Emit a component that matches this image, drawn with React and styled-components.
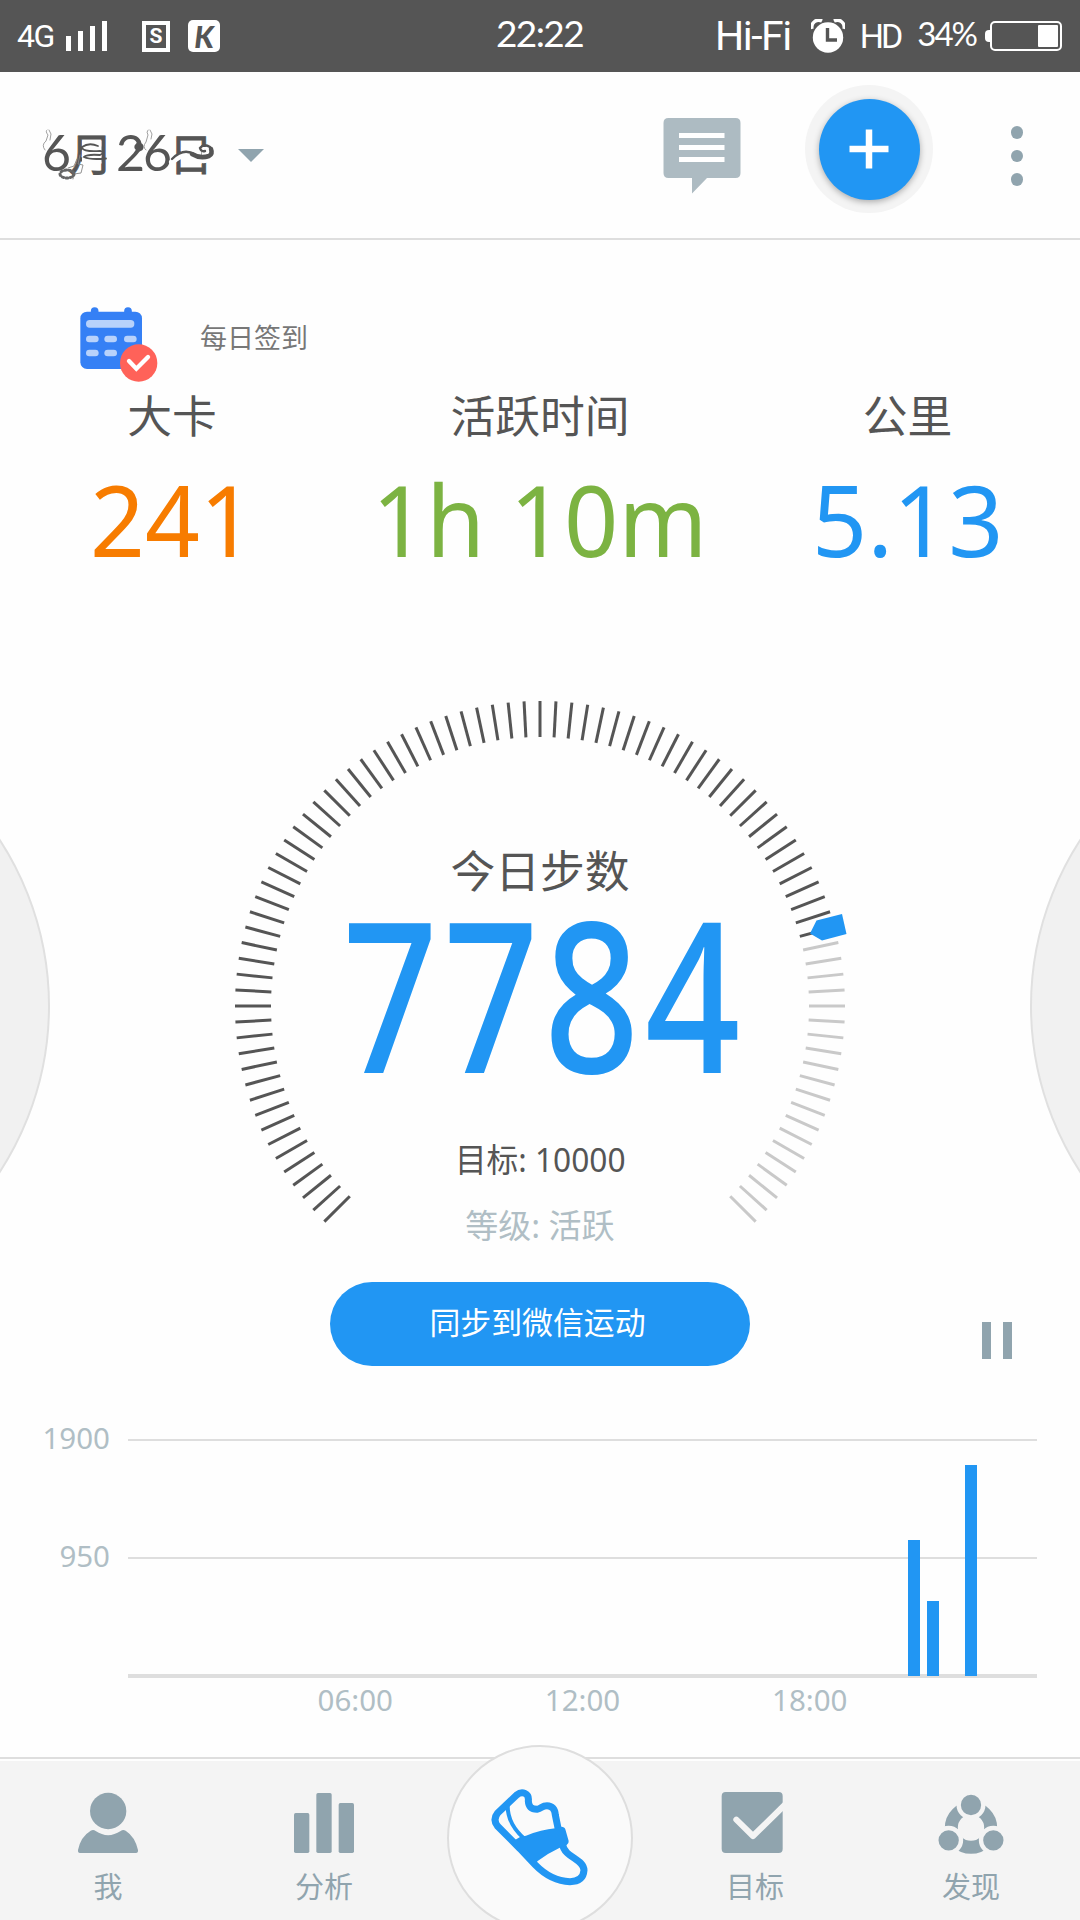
import React from "react";
import styled, { createGlobalStyle } from "styled-components";

const BLUE = "#2196f3";
const INK = "#555555";
const SLATE = "#90a4ae";
const MIST = "#b0bec5";
const RULE = "#dedede";

const GlobalStyle = createGlobalStyle`
  * { box-sizing: border-box; }
  body { margin: 0; background: #fefefe; }
`;

const Screen = styled.div`
  position: relative;
  width: 1080px;
  height: 1920px;
  overflow: hidden;
  display: flex;
  flex-direction: column;
  background: #fefefe;
  color: ${INK};
  font-family: "Noto Sans", "Noto Sans CJK SC", sans-serif;
`;

/* ---------- status bar ---------- */

const StatusBar = styled.header`
  flex: none;
  height: 72px;
  display: grid;
  grid-template-columns: 1fr auto 1fr;
  align-items: center;
  background: #555555;
  color: #fff;
  padding: 0 18px 0 17px;
  font-family: Roboto, "Liberation Sans", sans-serif;
`;

const StatusGroup = styled.div`
  display: flex;
  align-items: center;
  height: 72px;
  justify-content: ${(p) => (p.$end ? "flex-end" : "flex-start")};
`;

const StatusText = styled.span`
  display: block;
  white-space: nowrap;
  font-family: ${(p) => p.$family || "Roboto"}, sans-serif;
  font-size: ${(p) => p.$size}px;
  font-weight: ${(p) => p.$weight || 400};
  letter-spacing: ${(p) => p.$track || 0}px;
  line-height: 40px;
  width: ${(p) => (p.$width ? `${p.$width}px` : "auto")};
  padding-bottom: ${(p) => p.$lift || 0}px;
  margin-right: ${(p) => p.$after || 0}px;
`;

const Signal = styled.div`
  display: flex;
  align-items: flex-end;
  gap: 7px;
  height: 30px;
  margin-right: 35px;
`;

const SignalBar = styled.i`
  width: 5px;
  height: ${(p) => p.$height}px;
  background: #fff;
`;

const AppBadge = styled.span`
  display: flex;
  align-items: center;
  justify-content: center;
  width: ${(p) => (p.$solid ? 32 : 28)}px;
  height: ${(p) => (p.$solid ? 32 : 31)}px;
  margin-right: ${(p) => (p.$solid ? 0 : 18)}px;
  border: ${(p) => (p.$solid ? "none" : "4px solid #fff")};
  border-radius: ${(p) => (p.$solid ? 5 : 0)}px;
  background: ${(p) => (p.$solid ? "#fff" : "transparent")};
  color: ${(p) => (p.$solid ? "#555555" : "#fff")};
  font: ${(p) => (p.$solid ? "italic 900 30px/32px Lato" : "700 21px/23px Roboto")}, sans-serif;
`;

const BadgeNotch = styled.i`
  align-self: flex-start;
  width: 4px;
  height: 6px;
  margin: 0 -3px 0 0;
  transform: translateY(-12px);
  background: #fff;
`;

const AlarmSvg = styled.svg`
  width: 34px;
  height: 34px;
  margin-right: 15px;
`;

const Battery = styled.div`
  display: flex;
  align-items: center;
`;

const BatteryNub = styled.i`
  width: 5px;
  height: 12px;
  border-radius: 4px 0 0 4px;
  background: #fff;
`;

const BatteryCase = styled.div`
  display: flex;
  justify-content: flex-end;
  width: 72px;
  height: 30px;
  padding: 2px;
  border: 2px solid #fff;
  border-radius: 5px;
`;

const BatteryFill = styled.i`
  width: 20px;
  border-radius: 1px;
  background: #fff;
`;

/* ---------- app bar ---------- */

const AppBar = styled.div`
  flex: none;
  height: 168px;
  display: flex;
  align-items: flex-start;
  padding: 13px 57px 0 42px;
  border-bottom: 2px solid ${RULE};
`;

const DateButton = styled.div`
  position: relative;
  display: flex;
  align-items: baseline;
  width: 196px;
  height: 66px;
  margin-top: 34px;
  line-height: 66px;
  color: #555;
`;

const DateDigit = styled.span`
  width: ${(p) => p.$width}px;
  font-family: Lato, sans-serif;
  font-size: 50px;
`;

const DateHan = styled.span`
  width: ${(p) => p.$width}px;
  font-family: "Noto Sans CJK SC", sans-serif;
  font-size: 44px;
  -webkit-text-stroke: 0.8px #555;
`;

const Flourish = styled.svg`
  position: absolute;
  left: 0;
  top: 1px;
  width: 180px;
  height: 66px;
`;

const Caret = styled.i`
  margin-top: 64px;
  border: 13.5px solid transparent;
  border-top: 13px solid ${SLATE};
  border-bottom: 0;
`;

const ChatSvg = styled.svg`
  width: 78px;
  height: 76px;
  margin: 33px 64.5px 0 auto;
`;

const FabHalo = styled.div`
  display: flex;
  align-items: center;
  justify-content: center;
  width: 128px;
  height: 128px;
  border-radius: 50%;
  background: #f4f4f4;
`;

const Fab = styled.button`
  display: flex;
  align-items: center;
  justify-content: center;
  width: 101px;
  height: 101px;
  padding: 0;
  border: 0;
  border-radius: 50%;
  background: ${BLUE};
  box-shadow: 0 2px 6px rgba(0, 0, 0, 0.3);
`;

const MoreDots = styled.div`
  display: flex;
  flex-direction: column;
  gap: 11px;
  margin: 41px 0 0 78px;
`;

const Dot = styled.i`
  width: 12px;
  height: 12.5px;
  border-radius: 50%;
  background: ${SLATE};
`;

/* ---------- summary ---------- */

const CheckIn = styled.div`
  flex: none;
  display: flex;
  align-items: flex-start;
  height: 76px;
  margin-top: 67px;
  padding-left: 80px;
`;

const CalendarSvg = styled.svg`
  width: 78px;
  height: 75px;
  margin-right: 42px;
`;

const CheckInLabel = styled.span`
  margin-top: 11px;
  font-size: 27px;
  line-height: 40px;
  color: #777;
`;

const Stats = styled.div`
  flex: none;
  display: flex;
  height: 217px;
`;

const Stat = styled.div`
  display: flex;
  flex-direction: column;
  align-items: center;
  width: ${(p) => p.$width}px;
`;

const Label = styled.div`
  font-size: 44.8px;
  line-height: 66px;
  white-space: nowrap;
`;

const StatValue = styled.div`
  margin-top: 2px;
  font-size: 99.5px;
  line-height: 136px;
  white-space: nowrap;
  color: ${(p) => p.$color};
  transform: scaleX(${(p) => p.$squeeze});
`;

/* ---------- dial ---------- */

const DialRow = styled.section`
  flex: none;
  position: relative;
  display: flex;
  justify-content: center;
  height: 682px;
`;

const SideDial = styled.div`
  position: absolute;
  top: 101px;
  ${(p) => p.$side}: -560px;
  width: 610px;
  height: 610px;
  border: 2px solid #e0e0e0;
  border-radius: 50%;
  background: #f1f1f1;
`;

const Dial = styled.div`
  position: relative;
  display: flex;
  flex-direction: column;
  align-items: center;
  width: 620px;
  padding-top: 238px;
`;

const TickSvg = styled.svg`
  position: absolute;
  left: 0;
  top: 96px;
  width: 620px;
  height: 620px;
`;

const Steps = styled.div`
  height: 237px;
  margin-top: -15px;
  padding-left: 10px;
  font-size: 208.5px;
  line-height: 206px;
  font-weight: 500;
  letter-spacing: 6.8px;
  color: ${BLUE};
  transform: scaleX(0.8);
`;

const Note = styled.div`
  height: 66px;
  font-size: 33.5px;
  line-height: 66px;
  white-space: nowrap;
  color: ${(p) => p.$color};
  transform: scaleX(${(p) => p.$squeeze});
`;

const SyncRow = styled.div`
  flex: none;
  display: flex;
  justify-content: center;
  align-items: flex-start;
  height: 108px;
  padding-left: 330px;
`;

const SyncButton = styled.button`
  width: 420px;
  height: 84px;
  margin-right: auto;
  padding: 0 5px 6px 0;
  border: 0;
  border-radius: 42px;
  background: ${BLUE};
  color: #fff;
  font: 400 30.9px/70px "Noto Sans CJK SC", sans-serif;
`;

const Pause = styled.div`
  display: flex;
  gap: 12px;
  margin: 40px 68.5px 0 0;
`;

const PauseBar = styled.i`
  width: 9px;
  height: 37px;
  background: ${SLATE};
`;

/* ---------- chart ---------- */

const Chart = styled.section`
  flex: none;
  display: grid;
  grid-template-columns: 110px 909px;
  align-content: start;
  column-gap: 18px;
  height: 367px;
  padding-top: 49px;
  color: ${MIST};
  font-size: 29.5px;
`;

const AxisY = styled.div`
  display: flex;
  flex-direction: column;
  align-items: flex-end;
  gap: 78px;
  margin-top: -21px;
  line-height: 40px;
`;

const Plot = styled.div`
  height: 239px;
  display: grid;
  grid-template-columns: repeat(48, 1fr);
  align-items: end;
  justify-items: center;
  border-bottom: 4px solid ${RULE};
  background:
    linear-gradient(${RULE}, ${RULE}) 0 0 / 100% 2px no-repeat,
    linear-gradient(${RULE}, ${RULE}) 0 118px / 100% 2px no-repeat;
`;

const PlotBar = styled.i`
  grid-column: ${(p) => p.$slot};
  grid-row: 1;
  width: 12px;
  margin-bottom: -2px;
  background: ${BLUE};
`;

const AxisX = styled.div`
  grid-column: 2;
  display: grid;
  grid-template-columns: repeat(3, 227.25px);
  padding: 2px 0 0 113.6px;
  line-height: 40px;
  text-align: center;
`;

/* ---------- bottom navigation ---------- */

const Nav = styled.nav`
  flex: none;
  position: relative;
  display: grid;
  grid-template-columns: repeat(5, 216px);
  height: 163px;
  border-top: 2px solid ${RULE};
  background: linear-gradient(#fefefe 2px, #f4f4f4 2px);
`;

const NavItem = styled.div`
  display: flex;
  flex-direction: column;
  align-items: center;
  padding-top: 32px;
  padding-right: ${(p) => (p.$late ? 2 : 0)}px;
  color: ${SLATE};
`;

const NavSvg = styled.svg`
  width: 72px;
  height: 64px;
  margin-left: ${(p) => p.$nudge || 0}px;
`;

const NavLabel = styled.span`
  margin-top: 11px;
  font-size: 29px;
  line-height: 41px;
`;

const HomeDisc = styled.div`
  position: absolute;
  left: 447px;
  top: -14px;
  width: 186px;
  height: 186px;
  border: 2px solid ${RULE};
  border-radius: 50%;
  background: #fafafa;
  display: flex;
  justify-content: center;
  padding-top: 40px;
`;

const ShoeSvg = styled.svg`
  width: 100px;
  height: 100px;
`;

function Alarm() {
  return (
    <AlarmSvg viewBox="0 0 34 34">
      <path d="M1 10A7 7 0 0 1 11 2M33 10A7 7 0 0 0 23 2" fill="none" stroke="#fff" strokeWidth="3.5" />
      <circle cx="17" cy="18.5" r="15.2" fill="#fff" />
      <path d="M16.5 9V21H26" fill="none" stroke="#555" strokeWidth="3.4" />
    </AlarmSvg>
  );
}

function DateFlourish() {
  return (
    <Flourish viewBox="0 0 180 66" fill="none" strokeLinecap="round">
      <path d="M3 30Q-1 25 4 21L6 15Q3 11 5 10M8 20L9 14L7 10" stroke="#888" strokeWidth="0.8" />
      <rect x="40" y="20.5" width="19.500" height="23" fill="#fefefe" />
      <path d="M40 27Q47 22 56 26M40 28Q42 32 58 31Q64 32 58 35Q45 34 42 37Q48 40 64 38.500" stroke="#555" strokeWidth="1.800" />
      <path d="M38 35L36 44L41 45L39 53L32 54L31 59M35 39L32 46L26 48" stroke="#888" strokeWidth="0.9" />
      <ellipse cx="25" cy="54" rx="7" ry="4" stroke="#666" strokeWidth="3" strokeDasharray="1.5 2.5" />
      <circle cx="97" cy="27" r="2.600" stroke="#555" strokeWidth="4" strokeDasharray="1.8 1.8" />
      <path d="M104 30Q100 27 104 22L106 15Q104 12 106 10M109 19L110 14L108 10" stroke="#888" strokeWidth="0.8" />
      <rect x="139" y="27" width="20.500" height="17" fill="#fefefe" />
      <path d="M160 27H168V41H160Z" fill="#fefefe" />
      <path d="M130 42Q142 30 154 38Q163 43 169 36" stroke="#fefefe" strokeWidth="6" />
      <path d="M130 39Q142 27 153 35Q160 40 168 36Q170 29 168 27Q162 23 158 28Q159 32 163 31" stroke="#555" strokeWidth="2.400" />
      <path d="M150 34Q158 39 167 36Q171 34 169 29" stroke="#555" strokeWidth="4.500" />
    </Flourish>
  );
}

function Chat() {
  return (
    <ChatSvg viewBox="0 0 78 76">
      <path d="M5.500 0H72.500Q77.500 0 77.500 5V55Q77.500 60 72.500 60H44L29 75.500V60H5.500Q0.500 60 0.500 55V5Q0.500 0 5.500 0Z" fill="#adbbc2" />
      <path d="M16 17.500H61.500M16 29.500H61.500M16 41.500H61.500" stroke="#fff" strokeWidth="5" />
    </ChatSvg>
  );
}

function Calendar() {
  const cells = [[108, 137], [163, 137], [222, 137], [108, 179], [163, 179]];
  return (
    <CalendarSvg viewBox="90 51 234 225">
      <path d="M134 63V75M234 63V75" stroke="#3580f5" strokeWidth="23" strokeLinecap="round" />
      <rect x="91" y="65" width="185" height="172" rx="20" fill="#3580f5" />
      <rect x="108" y="90" width="145" height="23" rx="11" fill="#b8d2fb" />
      {cells.map(([x, y]) => (
        <rect key={`${x}-${y}`} x={x} y={y} width="38" height="20" rx="10" fill="#b8d2fb" />
      ))}
      <circle cx="266" cy="219" r="56" fill="#ff6259" />
      <path d="M237 213L259 236L294 201" fill="none" stroke="#fff" strokeWidth="13" strokeLinecap="round" />
    </CalendarSvg>
  );
}

function Ticks({ progress }) {
  const limit = -135 + 270 * progress;
  const angles = Array.from({ length: 91 }, (_, i) => -135 + i * 3);
  return (
    <TickSvg viewBox="-310 -310 620 620">
      {angles.map((a) => (
        <line
          key={a}
          y1="-305"
          y2="-269"
          transform={`rotate(${a})`}
          stroke={a <= limit ? "#555" : "#c9c9c9"}
          strokeWidth="3"
        />
      ))}
      <path d="M270 -72.500L276.500 -85.500L302 -92L306.500 -72L282 -65.500Z" fill={BLUE} />
    </TickSvg>
  );
}

function PersonIcon() {
  return (
    <NavSvg viewBox="216 183 216 192" fill="currentColor">
      <circle cx="324.500" cy="243" r="54.500" />
      <path d="M234 360Q242 320 272 302Q280 297 287 303Q324 328 362 303Q369 297 377 302Q405 320 414 360Q415 369 408 369H240Q233 369 234 360Z" />
    </NavSvg>
  );
}

function AnalysisIcon() {
  return (
    <NavSvg viewBox="864 183 216 192" fill="currentColor">
      <rect x="882" y="249" width="46" height="120" rx="5" />
      <rect x="949" y="189" width="46" height="180" rx="5" />
      <rect x="1016" y="219" width="46" height="150" rx="5" />
    </NavSvg>
  );
}

function GoalIcon() {
  return (
    <NavSvg viewBox="109 183 216 192" $nudge={-6}>
      <rect x="126" y="186" width="183" height="183" rx="12" fill="currentColor" />
      <path d="M170 269L220 318L318 222" fill="none" stroke="#f4f4f4" strokeWidth="18" strokeLinecap="round" strokeLinejoin="round" />
    </NavSvg>
  );
}

function DiscoverIcon() {
  const nodes = [[873, 225], [806, 331], [940, 331]];
  return (
    <NavSvg viewBox="765 183 216 192">
      <circle cx="873" cy="293" r="59" fill="none" stroke="currentColor" strokeWidth="39" />
      {nodes.map(([x, y]) => (
        <circle key={x} cx={x} cy={y} r="37" fill="currentColor" stroke="#f4f4f4" strokeWidth="13" />
      ))}
    </NavSvg>
  );
}

function Shoe() {
  return (
    <ShoeSvg viewBox="270 172 300 300" fill="none" stroke={BLUE}>
      <path
        strokeWidth="21"
        strokeLinejoin="round"
        d="M488 345C494 384 552 388 552 422C550 449 532 456 510 456C468 455 437 438 405 405L360 357L293 290Q277 270 293 250L350 196C366 183 388 190 385 214C386 232 394 238 411 239C426 236 425 228 441 228C456 228 465 238 466 256L475 300"
      />
      <path strokeWidth="12" d="M323 228Q323 284 374 328" />
      <path fill={BLUE} stroke="none" d="M336 336L360 322L378 318Q424 300 466 296L484 291Q494 291 496 299L506 334Q507 342 500 346L482 353Q446 370 413 394L400 410Z" />
    </ShoeSvg>
  );
}

const stats = [
  { label: "大卡", value: "241", color: "#f77c00", width: 344, squeeze: 0.965 },
  { label: "活跃时间", value: "1h 10m", color: "#7cb342", width: 392, squeeze: 0.955 },
  { label: "公里", value: "5.13", color: BLUE, width: 343, squeeze: 0.97 },
];

const activity = [
  { slot: 42, height: 136 },
  { slot: 43, height: 75 },
  { slot: 45, height: 211 },
];

export default function App() {
  return (
    <Screen>
      <GlobalStyle />
      <StatusBar>
        <StatusGroup>
          <StatusText $size={32} $width={49} $track={-1.5}>4G</StatusText>
          <Signal>
            {[15, 20, 25, 30].map((h) => <SignalBar key={h} $height={h} />)}
          </Signal>
          <AppBadge>S</AppBadge>
          <AppBadge $solid>K</AppBadge>
        </StatusGroup>
        <StatusText $family="Lato" $size={37} $track={-1.6} $lift={7}>22:22</StatusText>
        <StatusGroup $end>
          <StatusText $size={41} $track={-1.5} $after={20}>Hi-Fi</StatusText>
          <Alarm />
          <StatusText $size={34} $track={-3} $after={17}>HD</StatusText>
          <StatusText $family="Lato" $size={33} $track={-2} $lift={7} $after={9}>34%</StatusText>
          <Battery>
            <BatteryNub />
            <BatteryCase><BatteryFill /></BatteryCase>
          </Battery>
        </StatusGroup>
      </StatusBar>

      <AppBar>
        <DateButton>
          <DateDigit $width={27}>6</DateDigit>
          <DateHan $width={47}>月</DateHan>
          <DateDigit $width={27}>2</DateDigit>
          <DateDigit $width={26}>6</DateDigit>
          <DateHan $width={44}>日</DateHan>
          <DateFlourish />
        </DateButton>
        <Caret />
        <Chat />
        <FabHalo>
          <Fab>
            <svg width="40" height="40" viewBox="0 0 40 40">
              <path d="M20 0.500V39.500M0.500 20H39.500" stroke="#fff" strokeWidth="6.500" />
            </svg>
          </Fab>
        </FabHalo>
        <MoreDots><Dot /><Dot /><Dot /></MoreDots>
      </AppBar>

      <CheckIn>
        <Calendar />
        <CheckInLabel>每日签到</CheckInLabel>
      </CheckIn>

      <Stats>
        {stats.map((s) => (
          <Stat key={s.label} $width={s.width}>
            <Label>{s.label}</Label>
            <StatValue $color={s.color} $squeeze={s.squeeze}>{s.value}</StatValue>
          </Stat>
        ))}
      </Stats>

      <DialRow>
        <SideDial $side="left" />
        <SideDial $side="right" />
        <Dial>
          <Ticks progress={0.7784} />
          <Label>今日步数</Label>
          <Steps>7784</Steps>
          <Note $color={INK} $squeeze={0.945}>目标: 10000</Note>
          <Note $color={MIST} $squeeze={0.985}>等级: 活跃</Note>
        </Dial>
      </DialRow>

      <SyncRow>
        <SyncButton>同步到微信运动</SyncButton>
        <Pause><PauseBar /><PauseBar /></Pause>
      </SyncRow>

      <Chart>
        <AxisY><span>1900</span><span>950</span></AxisY>
        <Plot>
          {activity.map((b) => (
            <PlotBar key={b.slot} $slot={b.slot} style={{ height: b.height }} />
          ))}
        </Plot>
        <AxisX><span>06:00</span><span>12:00</span><span>18:00</span></AxisX>
      </Chart>

      <Nav>
        <NavItem><PersonIcon /><NavLabel>我</NavLabel></NavItem>
        <NavItem><AnalysisIcon /><NavLabel>分析</NavLabel></NavItem>
        <HomeDisc><Shoe /></HomeDisc>
        <span />
        <NavItem $late><GoalIcon /><NavLabel>目标</NavLabel></NavItem>
        <NavItem $late><DiscoverIcon /><NavLabel>发现</NavLabel></NavItem>
      </Nav>
    </Screen>
  );
}
